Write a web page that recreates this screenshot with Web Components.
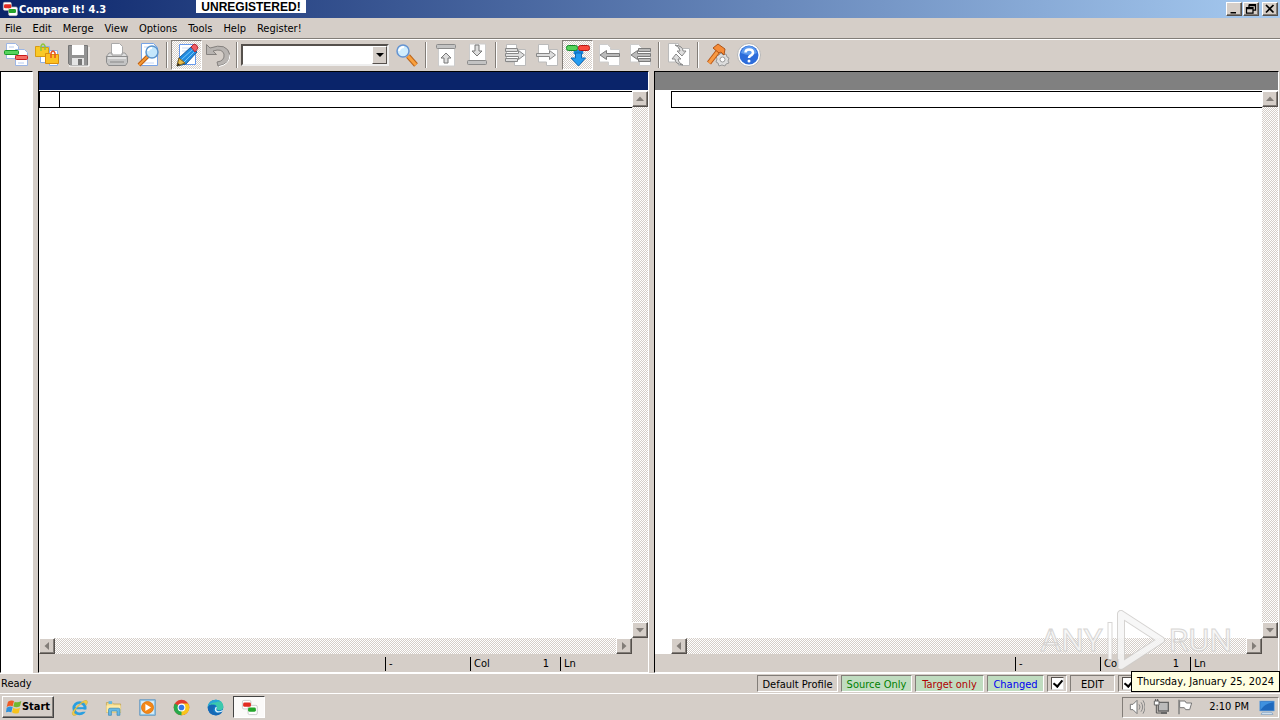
<!DOCTYPE html>
<html lang="en">
<head>
<meta charset="utf-8">
<title>Compare It! 4.3</title>
<style>
html, body { height: 100%; margin: 0; }
body {
  --face: #d5cec8; --shade: #827d78; --lite: #fff;
  --dither: repeating-conic-gradient(#fff 0 25%, #d5cec8 0 50%) 0 0 / 2px 2px;
  font: 11px/14px "DejaVu Sans Condensed", "DejaVu Sans", sans-serif;
  color: #000; background: var(--face); overflow: hidden;
}
</style>
</head>
<body>
<compare-app></compare-app>
<script>
const ICONS = {
  logo: `<rect x="2" y="2" width="12" height="12" rx="2" fill="#fff" stroke="#bbb"/><rect x="10" y="9" width="13" height="13" rx="2" fill="#fff" stroke="#bbb"/><rect x="3" y="5" width="11" height="6" rx="2" fill="#e22b22"/><rect x="10" y="12" width="11" height="6" rx="2" fill="#25a52b"/>`,
  files: `<path d="M2.500.5h9l3 3v12h-12z" fill="#fff" stroke="#9db6e4"/><path d="M11.500 6.500h9l3 3v13h-12z" fill="#fff" stroke="#9db6e4"/><path d="M14 20h6M5 4h5" stroke="#b8cbee"/><rect x=".5" y="7.500" width="14" height="4" rx="1" fill="#58d35e" stroke="#169b26"/><rect x="11.500" y="12.500" width="12" height="4" rx="1" fill="#f46d64" stroke="#c81a1a"/>`,
  folders: `<path d="M5.500 3.500h9v16h-9zM14.500 7.500h8v15h-8z" fill="#fff" stroke="#8db0e8"/><path d="M.5 3.500h4l1 1h8v9H.5z" fill="#f9c927" stroke="#d89b10"/><path d="M6 8V3q2-4 4 0v4" fill="none" stroke="#8cc63c" stroke-width="1.500"/><path d="M10.500 10.500h4l1 1h8v9h-13z" fill="#fbc021" stroke="#d98d0c"/><path d="M16 15v-5q2-4 4 0v5" fill="none" stroke="#e8511e" stroke-width="1.500"/>`,
  save: `<path d="M2.500 2.500h19v20h-17l-2-2z" fill="#939393" stroke="#777"/><path d="M6 2h12v10H6z" fill="#fff"/><path d="M6 15h12v7H6z" fill="#e5e5e5"/><path d="M12 16h4v6h-4z" fill="#777"/><path d="M3 23h20V4" fill="none" stroke="#fff"/>`,
  print: `<path d="M6.500.5h8l3 3v10h-11z" fill="#fff" stroke="#aaa"/><path d="M4 10h3v2h10v-2h3l3 4H1z" fill="#ddd" stroke="#999"/><path d="M1.500 13.500h21v6l-2 3h-17l-2-3z" fill="#c4c4c4" stroke="#8c8c8c"/><path d="M3 15h18" stroke="#fff"/><path d="M5 19h14" stroke="#888"/>`,
  preview: `<path d="M5.500.5h12l4 4v18h-16z" fill="#fff" stroke="#78a4e6"/><path d="M8 4h9M8 20h10" stroke="#c4d6f4"/><path d="M12 13 3 22" stroke="#bd5c10" stroke-width="4"/><path d="M12 13 3 22" stroke="#f59a35" stroke-width="2"/><circle cx="16" cy="9" r="6" fill="#c5e7fc" stroke="#5b94cc" stroke-width="1.500"/><path d="M12 8q1-3 4-3" fill="none" stroke="#fff" stroke-width="2"/>`,
  edit: `<path d="M4.500 1.500h16v20h-16z" fill="#fff" stroke="#6799ed"/><path d="M7 5h9M7 8h7" stroke="#cbdcf7"/><path d="m2 23 2-8 12-11 6 5-11 12z" fill="#228ce0" stroke="#135a9f"/><path d="m6 17 12-11M9 19 20 8" stroke="#77c8fb"/><path d="m16 4 3-3q3 0 4 4l-3 4z" fill="#ed5d66" stroke="#b02732"/><path d="m2 23 2-8 6 5z" fill="#e9bd4d" stroke="#866118"/><path d="m2 23 1-3 2 2z" fill="#222"/>`,
  undo: `<path d="M.5 1.500v10h10L7 8q9-3 11 3 1 7-7 8l1 4q12-2 12-11Q21-1 4 5z" fill="#b8b4b1" stroke="#85817e"/><path d="M13 23.500q11-2 11-12" fill="none" stroke="#fff"/>`,
  find: `<path d="m13 13 8 9" stroke="#bb6318" stroke-width="5"/><path d="m13 13 8 9" stroke="#f8a03e" stroke-width="3"/><circle cx="8" cy="8" r="6" fill="#d0edfd" stroke="#6594d2" stroke-width="1.500"/><path d="M4 8q1-4 5-4" fill="none" stroke="#fff" stroke-width="2"/>`,
  top: `<path d="M4.500 5h16v18h-16z" fill="#fff" stroke="#ccc"/><rect x="2.500" y="1.500" width="19" height="4" rx="1" fill="#c3c3c3" stroke="#8a8a8a"/><path d="m12 10 5 5h-3v5h-4v-5H7z" fill="#ddd" stroke="#777"/>`,
  bottom: `<path d="M4.500 1h16v17h-16z" fill="#fff" stroke="#ccc"/><rect x="2.500" y="17.500" width="19" height="4" rx="1" fill="#c3c3c3" stroke="#8a8a8a"/><path d="m12 13 5-5h-3V2h-4v6H7z" fill="#ddd" stroke="#777"/>`,
  allright: `<path d="M2.500 1.500h10v5h9v16h-11V19h-8z" fill="#fff" stroke="#bbb"/><path d="M1.500 5.500h12v3h-12zM1.500 15.500h12v3h-12zM1.500 10.500h13v-3l6 4.500-6 4.500v-3h-13z" fill="#ddd" stroke="#888"/>`,
  right: `<path d="M3.500 1.500h10v5h9v16h-11V19h-8z" fill="#fff" stroke="#bbb"/><path d="M1.500 10.500h13v-3l6 4.500-6 4.500v-3h-13z" fill="#ddd" stroke="#888"/>`,
  merge: `<path d="M8 8q4 1 4 5 0-4 5-5" fill="none" stroke="#1686dc" stroke-width="5"/><path d="M9.500 10h6v5h4L12.500 23 5 15h4.500z" fill="#249cf1" stroke="#0b69ba"/><rect x=".5" y="2.500" width="11" height="5" rx="2" fill="#55d359" stroke="#13882a"/><rect x="12.500" y="2.500" width="11" height="5" rx="2" fill="#fa4a3d" stroke="#b31715"/>`,
  left: `<path d="M2.500 1.500h8l3 3v2h9v16h-11V19h-9z" fill="#fff" stroke="#ccc"/><path d="M22.500 10.500h-13v-3L3 12l6.500 4.500v-3h13z" fill="#bbb" stroke="#7b7b7b"/>`,
  allleft: `<path d="M2.500 1.500h8l3 3v2h9v16h-11V19h-9z" fill="#fff" stroke="#ccc"/><path d="M22.500 5.500h-12v3h12zM22.500 15.500h-12v3h12zM22.500 10.500h-13v-3L3 12l6.500 4.500v-3h13z" fill="#bbb" stroke="#7b7b7b"/>`,
  refresh: `<path d="M1.500.5h10v5h11v17h-11V19h-10z" fill="#fff" stroke="#bbb"/><path d="M8 2q8 1 8 6h3l-4 5-5-5h3q0-4-5-6zM16 22q-8-1-8-6H5l4-5 5 5h-3q0 4 5 6z" fill="#ddd" stroke="#888"/>`,
  tools: `<path d="m15 10 2 2 3-1 1 3 2 1-1 3 1 2-3 1-1 2-3-1-3 1-1-3-2-1 1-3-1-3 3-1z" fill="#ddd" stroke="#999"/><circle cx="16.500" cy="16.500" r="2.500" fill="#fff" stroke="#999"/><path d="M13 7 3 20" stroke="#ba5817" stroke-width="5"/><path d="M13 7 3 20" stroke="#f89b45" stroke-width="3"/><path d="m7 5 5-4 7 5-1 6-3-3-2 1z" fill="#f68c38" stroke="#ae5418"/>`,
  help: `<circle cx="12" cy="12" r="11.500" fill="#fff" stroke="#b5b5b5"/><circle cx="12" cy="12" r="9.500" fill="#2c6cda"/><path d="M4 10q2-7 8-7t8 7q-7 4-16 0" fill="#5e9bee"/><path d="M8.500 9.500q0-3 3.500-3 4 0 4 3 0 2-3 3.500-1 1-1 2" fill="none" stroke="#fff" stroke-width="2.500"/><circle cx="12" cy="18" r="1.500" fill="#fff"/>`,
  ie: `<circle cx="12" cy="13" r="8" fill="none" stroke="#2a9fe0" stroke-width="4"/><path d="M5 11.500h14v3H5z" fill="#2a9fe0"/><path d="M14 15h9v3h-9z" fill="#d5cec8"/><path d="M3 23q-4-3 4-11Q17 1 22 2q3 2-1 7 0-4-3-4-4 1-9 7-6 7-4 9l3 1q-2 2-5 1z" fill="#f2cf48" stroke="#bc981c" stroke-width=".5"/>`,
  explorer: `<path d="M2 5h8l2 2h10v12H2z" fill="#f2d98b" stroke="#bf9f4a"/><path d="M5 3h5v4H5z" fill="#65b7df"/><path d="M2 9h20v10H2z" fill="#ffeaa5"/><path d="M5 23v-8q0-2 2-2h12q2 0 2 2v8h-4v-6H9v6z" fill="#66b9e6" stroke="#3986b4"/>`,
  player: `<path d="M1 1h22v22H1z" fill="#9bd0ef" stroke="#4988ba"/><path d="M3 3h18v18H3z" fill="#dceef8"/><circle cx="12" cy="12" r="8.500" fill="#f48818" stroke="#d46b05"/><path d="m9 7 8 5-8 5z" fill="#fff"/>`,
  chrome: `<circle cx="12" cy="12" r="11" fill="#e23b2e"/><path d="M12 12 2.500 6.500A11 11 0 0 0 12 23l5-8z" fill="#27a94b"/><path d="M12 12v11a11 11 0 0 0 9.500-16.500H12z" fill="#f9c51b"/><circle cx="12" cy="12" r="5.500" fill="#fff"/><circle cx="12" cy="12" r="4" fill="#3678e5"/>`,
  edge: `<circle cx="12" cy="12" r="11" fill="#127ac7"/><path d="M1 11Q3 1 13 1q10 1 10 10 0 5-6 5-4 0-3-4-1-5-6-4-5 0-7 3z" fill="#3cc9ac"/><path d="M1 11Q3 1 13 1q4 0 7 3-4-1-8 1-6-1-11 6z" fill="#2aa6d8"/><path d="M10 11q-4 8 4 9 5 0 8-3-3 7-11 6Q1 21 1 12q2-5 7-4 3 0 4 3z" fill="#1668b5"/><path d="M14 12q-3 6 5 5l4-2-2 3q-9 3-10-3 0-3 2-4z" fill="#d7f0fa"/>`,
  flag: `<path d="M3 4q5-3 9-1l-2 8q-4-2-9 1z" fill="#ef5b25"/><path d="M13 4q4 2 10-1l-2 8q-6 3-10 0z" fill="#72b72f"/><path d="M1 13q5-3 9-1l-2 8q-4-2-8 0z" fill="#2e91dc"/><path d="M11 13q4 3 10 0l-2 8q-6 2-10-1z" fill="#f7c31c"/>`,
  sound: `<path d="M2 8h4l6-6v20l-6-6H2z" fill="#fff" stroke="#777" stroke-width="1.500"/><path d="M15 8q3 4 0 8M18 5q5 7 0 14M21 2q6 10 0 20" fill="none" stroke="#888" stroke-width="1.500"/>`,
  network: `<path d="M8 5h15v13H8z" fill="#bbb" stroke="#666" stroke-width="2"/><path d="M12 21h9" stroke="#666" stroke-width="3"/><path d="M2 3h7v6H2z" fill="#fff" stroke="#666" stroke-width="1.500"/><path d="M5 9v12h7M4 3V0M7 3V0" fill="none" stroke="#555" stroke-width="1.500"/>`,
  action: `<path d="M3 1v22" stroke="#777" stroke-width="2"/><path d="M4 3h8l2 3h8l-3 10h-6l-2-3H4z" fill="#fff" stroke="#777" stroke-width="1.500"/>`,
  desktop: `<path d="M1 3h22v15H1z" fill="#1e68bd" stroke="#8cb5dc"/><path d="M2 17Q9 6 22 5V4H2z" fill="#3f91df"/><path d="M5 20h14l2 3H3z" fill="#ddeaf8" stroke="#6f97bd"/>`,
  min: `<path d="M5 18h11v3H5z"/>`,
  restore: `<path d="M8 3h13v11h-4M8 9V3M8 5h13M3 9h13v11H3zM3 11h13" fill="none" stroke="#000" stroke-width="2.500"/>`,
  close: `<path d="m4 4 15 15M19 4 4 19" stroke="#000" stroke-width="3.500"/>`,
  up: `<path d="m12 7 8 9H4z" fill="#827d78"/>`, down: `<path d="m12 17 8-9H4z" fill="#827d78"/>`,
  prev: `<path d="m7 12 9-8v16z" fill="#827d78"/>`, next: `<path d="m17 12-9-8v16z" fill="#827d78"/>`,
  play: `<path d="M18 4v52l40-26z" fill="none" stroke="#cfcdcb" stroke-width="8" stroke-linejoin="round"/><path d="M18 4v52l40-26z" fill="none" stroke="#f6f6f6" stroke-width="6" stroke-linejoin="round"/><path d="M7 12v38" stroke="#d2d0ce" stroke-width="5"/><path d="M7 13v36" stroke="#fff" stroke-width="3"/>`
};
const define = (name, css, html) => customElements.define(name, class extends HTMLElement {
  connectedCallback() {
    if (this.shadowRoot) return;
    this.attachShadow({ mode: "open" }).innerHTML =
      `<style>:host{display:block}*{box-sizing:border-box}${css}</style>` +
      (typeof html === "function" ? html(this) : html);
  }
});

define("ui-icon", `:host{width:var(--size,24px);height:var(--size,24px);flex:none}svg{display:block;width:100%;height:100%}`,
  el => `<svg viewBox="${el.getAttribute("name") === "play" ? "0 0 66 60" : "0 0 24 24"}" aria-hidden="true">${ICONS[el.getAttribute("name")]}</svg>`);

define("raised-button", `button{display:grid;place-items:center;width:16px;height:var(--h,16px);padding:0;background:var(--face);border:1px solid;border-color:#fff #55504c #55504c #fff;box-shadow:inset -1px -1px var(--shade)}ui-icon{--size:12px}`,
  el => `<button aria-label="${el.getAttribute("label")}"><ui-icon name="${el.getAttribute("icon")}"></ui-icon></button>`);

define("title-bar", `:host{display:flex;align-items:center;height:18px;padding:0 2px;gap:1px;background:linear-gradient(90deg,#0a246a,#a6caf0);color:#fff;font-weight:bold;position:relative}
  ui-icon{--size:16px}h1{font:inherit;margin:0;flex:1;padding-top:1px}
  .mark{position:absolute;left:196px;top:0;width:110px;height:13px;background:#fff;color:#000;text-align:center;font:bold 12px/14px "Liberation Sans",sans-serif}
  raised-button{--h:14px}.last{margin-left:2px}`,
  `<ui-icon name="logo"></ui-icon><h1><slot></slot></h1><span class="mark">UNREGISTERED!</span>
   <raised-button icon="min" label="Minimize"></raised-button><raised-button icon="restore" label="Restore"></raised-button><raised-button class="last" icon="close" label="Close"></raised-button>`);

define("menu-bar", `:host{display:flex;height:20px}`, `<slot></slot>`);
define("menu-item", `button{height:20px;padding:1px 6px 0 5px;border:0;background:none;font:inherit;color:inherit}`, `<button><slot></slot></button>`);

define("tool-button", `button{display:grid;place-items:center;width:31px;height:30px;padding:0;border:1px solid transparent;background:none}
  :host([pressed]) button{background:var(--dither);border-color:var(--shade) #fff #fff var(--shade)}`,
  el => `<button aria-label="${el.getAttribute("label")}"><ui-icon name="${el.getAttribute("icon")}"></ui-icon></button>`);
define("tool-sep", `:host{width:2px;height:26px;margin:0 3px;border-left:1px solid var(--shade);border-right:1px solid #fff;box-sizing:border-box}:host([blank]){border-color:transparent}`, ``);
define("combo-box", `:host{position:relative;width:148px;height:22px;margin-right:2px}
  select{appearance:none;width:100%;height:100%;background:#fff;border:2px solid;border-color:#55504c #eee #eee #55504c;border-radius:0}
  span{position:absolute;right:2px;top:2px;width:15px;height:18px;display:grid;place-items:center;background:var(--face);border:1px solid;border-color:#fff #55504c #55504c #fff;pointer-events:none}
  i{border:4px solid transparent;border-top-color:#000;border-bottom:0}`,
  `<select aria-label="Search text"><option></option></select><span><i></i></span>`);
const tool = ([icon, label, on]) => icon === "|" ? `<tool-sep${label ? " blank" : ""}></tool-sep>` : icon === "combo" ? "<combo-box></combo-box>" :
  `<tool-button icon="${icon}" label="${label}"${on ? " pressed" : ""}></tool-button>`;
define("tool-bar", `:host{display:flex;align-items:center;height:33px;border-top:1px solid var(--shade);box-shadow:inset 0 1px #fff;box-sizing:border-box}`,
  () => [["files","Compare files"],["folders","Compare folders"],["save","Save"],["|","blank"],["print","Print"],["preview","Preview"],["|"],["edit","Edit mode",1],["undo","Undo"],["|"],["combo"],["find","Find"],["|"],["top","First change"],["bottom","Last change"],["|"],["allright","Copy all right"],["right","Copy right"],["merge","Merge",1],["left","Copy left"],["allleft","Copy all left"],["|"],["refresh","Recompare"],["|"],["tools","Settings"],["help","Help"]].map(tool).join(""));

define("file-pane", `:host{display:grid;grid-template:18px 1px 1fr 16px 18px / var(--gutter,0px) 1fr 16px;border:1px solid #fff;border-top-color:#000;border-left-color:#000;background:#fff;box-sizing:border-box}
  header{grid-area:1/1/2/-1;background:var(--head)}
  .text{grid-area:3/2/4/3}
  .line{display:flex;height:17px;border:1px solid #000;border-right:0}
  .num{display:none;width:20px;border-right:1px solid #000}:host([numbered]) .num{display:block}
  input{flex:1;min-width:0;border:0;padding:0 2px;background:none;font:inherit;outline:0}
  .v{grid-area:3/3/4/4;flex-direction:column}.h{grid-area:4/2/5/3}
  .v,.h{display:flex;justify-content:space-between;background:var(--dither)}
  .corner{grid-area:4/3/5/4;background:var(--face)}
  footer{grid-area:5/1/6/-1;background:var(--face);display:flex;justify-content:flex-end;padding-top:3px}
  footer span{height:14px;padding:0 4px 0 3px;border-left:1px solid #000;display:flex;justify-content:space-between}
  .a{width:85px}.b{width:90px}.b b{font-weight:normal;padding-right:7px}.c{width:88px}`,
  `<header></header><div class="text"><div class="line"><div class="num"></div><input aria-label="Line text"></div></div>
   <div class="v"><raised-button icon="up" label="Scroll up"></raised-button><raised-button icon="down" label="Scroll down"></raised-button></div>
   <div class="h"><raised-button icon="prev" label="Scroll left"></raised-button><raised-button icon="next" label="Scroll right"></raised-button></div>
   <div class="corner"></div><footer><span class="a">-</span><span class="b">Col<b>1</b></span><span class="c">Ln</span></footer>`);

define("status-cell", `:host{width:var(--w);height:17px;line-height:17px;text-align:center;border:1px solid;border-color:var(--shade) #fff #fff var(--shade);box-sizing:border-box;white-space:nowrap;background:var(--fill,none)}`, `<slot></slot>`);
define("status-check", `:host{width:20px;height:17px;border:1px solid;border-color:var(--shade) #fff #fff var(--shade);box-sizing:border-box}
  input{appearance:none;display:block;position:relative;width:13px;height:13px;margin:1px 3px;background:#fff;border:1px solid;border-color:#55504c #ddd #ddd #55504c}
  input:checked::after{content:"";position:absolute;left:3px;top:0;width:4px;height:7px;border:solid #000;border-width:0 2px 2px 0;transform:rotate(40deg)}`,
  el => `<input type="checkbox" checked aria-label="${el.getAttribute("label")}">`);
define("status-bar", `:host{display:flex;align-items:center;height:20px;gap:3px;padding:0 142px 0 1px;border-top:1px solid #fff;box-sizing:border-box}
  .ready{flex:1}.on{--fill:#c0dcc0}`,
  `<span class="ready">Ready</span><status-cell style="--w:81px">Default Profile</status-cell>
   <status-cell class="on" style="--w:71px;color:#008000">Source Only</status-cell><status-cell class="on" style="--w:69px;color:#b00000">Target only</status-cell>
   <status-cell class="on" style="--w:57px;color:#0000f0">Changed</status-cell><status-check label="Show changes"></status-check>
   <status-cell style="--w:45px">EDIT</status-cell><status-check label="Show options"></status-check>`);

define("task-bar", `:host{display:flex;align-items:center;height:27px;padding:0 1px 0 2px;border-top:1px solid #fff;position:relative;box-sizing:border-box}
  button{font:inherit;padding:0;border:0;background:none;display:flex;align-items:center;justify-content:center}
  .start{width:52px;height:22px;font-weight:bold;border:1px solid;border-color:#fff #444 #444 #fff;box-shadow:inset -1px -1px var(--shade);--size:16px}
  .quick{display:flex;margin-left:8px;--size:17px;flex:1}.quick button{width:34px;height:22px}
  .quick .app{width:32px;margin-left:1px;border:1px solid;border-color:#444 #fff #fff #444;background:#fbfaf9}
  .tray{display:flex;align-items:center;width:157px;height:21px;padding:0 3px 0 6px;gap:8px;border:1px solid;border-color:var(--shade) #fff #fff var(--shade);--size:16px}
  time{flex:1;text-align:right;margin-right:2px;white-space:nowrap}
  .tip{position:absolute;right:0;bottom:28px;width:149px;height:21px;line-height:19px;text-align:center;border:1px solid #000;background:#ffffe1;white-space:nowrap}`,
  `<button class="start"><ui-icon name="flag"></ui-icon>Start</button><nav class="quick">${[["ie","Internet Explorer"],["explorer","Explorer"],["player","Media Player"],["chrome","Chrome"],["edge","Edge"]].map(i => `<button aria-label="${i[1]}"><ui-icon name="${i[0]}"></ui-icon></button>`).join("")}<button class="app" aria-label="Compare It!"><ui-icon name="logo"></ui-icon></button></nav>
   <div class="tray"><ui-icon name="sound"></ui-icon><ui-icon name="network"></ui-icon><ui-icon name="action"></ui-icon><time>2:10 PM</time><ui-icon name="desktop"></ui-icon></div><div class="tip" role="tooltip">Thursday, January 25, 2024</div>`);

define("water-mark", `:host{position:absolute;right:48px;bottom:50px;display:flex;align-items:center;opacity:.85;color:#f6f6f6;pointer-events:none;font:32px/32px Roboto,"Liberation Sans",sans-serif;-webkit-text-stroke:1px #d2d0ce}
  ui-icon{width:66px;height:60px}`, `<span>ANY</span><ui-icon name="play"></ui-icon><span>RUN</span>`);

define("compare-app", `:host{display:flex;flex-direction:column;height:100vh;position:relative}
  main{flex:1;min-height:0;display:grid;grid-template-columns:33px minmax(0,611fr) minmax(0,625fr);gap:5px;padding-right:1px}
  .map{background:#fff;border:1px solid;border-color:#000 #fff #fff #000}
  .one{--head:#0a246a}.two{--head:#808080;--gutter:16px}`,
  `<title-bar>Compare It! 4.3</title-bar>
   <menu-bar>${["File","Edit","Merge","View","Options","Tools","Help","Register!"].map(t => `<menu-item>${t}</menu-item>`).join("")}</menu-bar>
   <tool-bar></tool-bar><main><div class="map"></div><file-pane class="one" numbered></file-pane><file-pane class="two"></file-pane></main>
   <status-bar></status-bar><water-mark></water-mark><task-bar></task-bar>`);
</script>
</body>
</html>
